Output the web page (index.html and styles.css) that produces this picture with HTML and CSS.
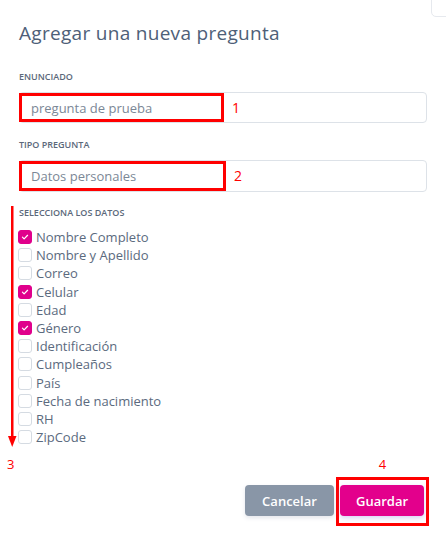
FILE: index.html
```html
<!DOCTYPE html>
<html lang="es">
<head>
<meta charset="utf-8">
<link rel="stylesheet" href="styles.css">
</head>
<body>
<div class="corner"></div>
<div class="modal">
  <h1 class="title">Agregar una nueva pregunta</h1>

  <div class="field">
    <div class="label">ENUNCIADO</div>
    <div class="input">
      <div class="mark mark-1"><span class="value">pregunta de prueba</span></div>
      <span class="num">1</span>
    </div>
  </div>

  <div class="field">
    <div class="label">TIPO PREGUNTA</div>
    <div class="input input-2">
      <div class="mark mark-2"><span class="value">Datos personales</span></div>
      <span class="num">2</span>
    </div>
  </div>

  <div class="field field-list">
    <div class="label">SELECCIONA LOS DATOS</div>
    <ul class="list">
      <li class="item"><span class="box on"><svg viewBox="0 0 14 14"><path d="M4 7.2l2 2 4-4.2"/></svg></span>Nombre Completo</li>
      <li class="item"><span class="box"></span>Nombre y Apellido</li>
      <li class="item"><span class="box"></span>Correo</li>
      <li class="item"><span class="box on"><svg viewBox="0 0 14 14"><path d="M4 7.2l2 2 4-4.2"/></svg></span>Celular</li>
      <li class="item"><span class="box"></span>Edad</li>
      <li class="item"><span class="box on"><svg viewBox="0 0 14 14"><path d="M4 7.2l2 2 4-4.2"/></svg></span>Género</li>
      <li class="item"><span class="box"></span>Identificación</li>
      <li class="item"><span class="box"></span>Cumpleaños</li>
      <li class="item"><span class="box"></span>País</li>
      <li class="item"><span class="box"></span>Fecha de nacimiento</li>
      <li class="item"><span class="box"></span>RH</li>
      <li class="item"><span class="box"></span>ZipCode</li>
    </ul>
    <svg class="arrow" viewBox="0 0 14 270" width="14" height="270">
      <rect x="5" y="0" width="2.5" height="232" fill="#f00"/>
      <path d="M2 230 L10.5 230 L6.2 241 Z" fill="#f00"/>
      <text x="1" y="263" class="arrow-num">3</text>
    </svg>
  </div>

  <div class="actions">
    <button class="btn cancel">Cancelar</button>
    <div class="save-wrap">
      <span class="num num-4">4</span>
      <div class="mark mark-save"><button class="btn save">Guardar</button></div>
    </div>
  </div>
</div>
</body>
</html>
```
FILE: styles.css
```css
* { box-sizing: border-box; }
html, body { margin: 0; padding: 0; background: #fff; }
body {
  font-family: "Open Sans", "Liberation Sans", sans-serif;
  width: 446px;
  height: 540px;
  overflow: hidden;
  position: relative;
}
.corner {
  position: absolute;
  top: -6px;
  left: 431px;
  width: 30px;
  height: 23px;
  border: 1px solid #e6e9ee;
  border-radius: 5px;
}
.modal {
  padding: 20px 19px 0 19px;
  display: flex;
  flex-direction: column;
}
.title {
  margin: 0;
  font-size: 19px;
  line-height: 26px;
  font-weight: 400;
  color: #4e6078;
  letter-spacing: 0.3px;
}
.field { display: flex; flex-direction: column; }
.field:nth-of-type(1) { margin-top: 25px; }
.label {
  font-size: 9px;
  line-height: 12px;
  font-weight: 600;
  color: #5b687a;
}
.input {
  margin-top: 9px;
  height: 31px;
  border: 1px solid #dde2e8;
  border-radius: 4px;
  display: flex;
  align-items: center;
}
.input-2 { height: 32px; }
.field + .field { margin-top: 16px; }
.mark {
  border: 3px solid #f00;
}
.mark-1 { width: 205px; height: 29px; margin-left: -1px; display: flex; align-items: center; }
.mark-2 { width: 207px; height: 30px; margin-left: -1px; display: flex; align-items: center; }
.value {
  padding-left: 9px;
  font-size: 13px;
  color: #7b8796;
}
.num {
  color: #f00;
  font-size: 14px;
  line-height: 16px;
  margin-left: 8px;
}
.field-list { position: relative; margin-top: 15px !important; }
.list {
  list-style: none;
  margin: 9px 0 0 -1px;
  padding: 0;
}
.item {
  display: flex;
  align-items: center;
  height: 18.2px;
  font-size: 13px;
  font-weight: 500;
  color: #5b6a7e;
}
.box {
  width: 14px;
  height: 14px;
  border: 1px solid #d5dbe2;
  border-radius: 3px;
  margin-right: 4px;
  flex: none;
  display: flex;
}
.box.on { background: #e0008c; border-color: #e0008c; }
.box svg { width: 12px; height: 12px; }
.box svg path { fill: none; stroke: #fff; stroke-width: 1.4; stroke-linecap: round; stroke-linejoin: round; }
.arrow {
  position: absolute;
  left: -13px;
  top: -1px;
  overflow: visible;
}
.arrow-num { font-size: 13px; fill: #f00; font-family: "Open Sans", sans-serif; }
.actions {
  display: flex;
  justify-content: flex-end;
  align-items: flex-end;
  margin-top: 10px;
  margin-right: -2px;
  gap: 2px;
}
.btn {
  font-family: inherit;
  height: 31px;
  border: none;
  border-radius: 4px;
  color: #fff;
  font-size: 13px;
  font-weight: 600;
  padding: 0;
}
.cancel {
  width: 89px;
  background: #8996a7;
  margin-bottom: 10px;
  box-shadow: 0 2px 4px rgba(120,130,160,0.2);
}
.save-wrap {
  display: flex;
  flex-direction: column;
  align-items: center;
}
.num-4 { margin: 0 0 5px 0; font-size: 13px; }
.mark-save {
  padding: 5px 2px 7px 1px;
}
.save {
  width: 84px;
  background: #e3008c;
  box-shadow: 0 2px 5px rgba(140,120,220,0.35);
}
```
